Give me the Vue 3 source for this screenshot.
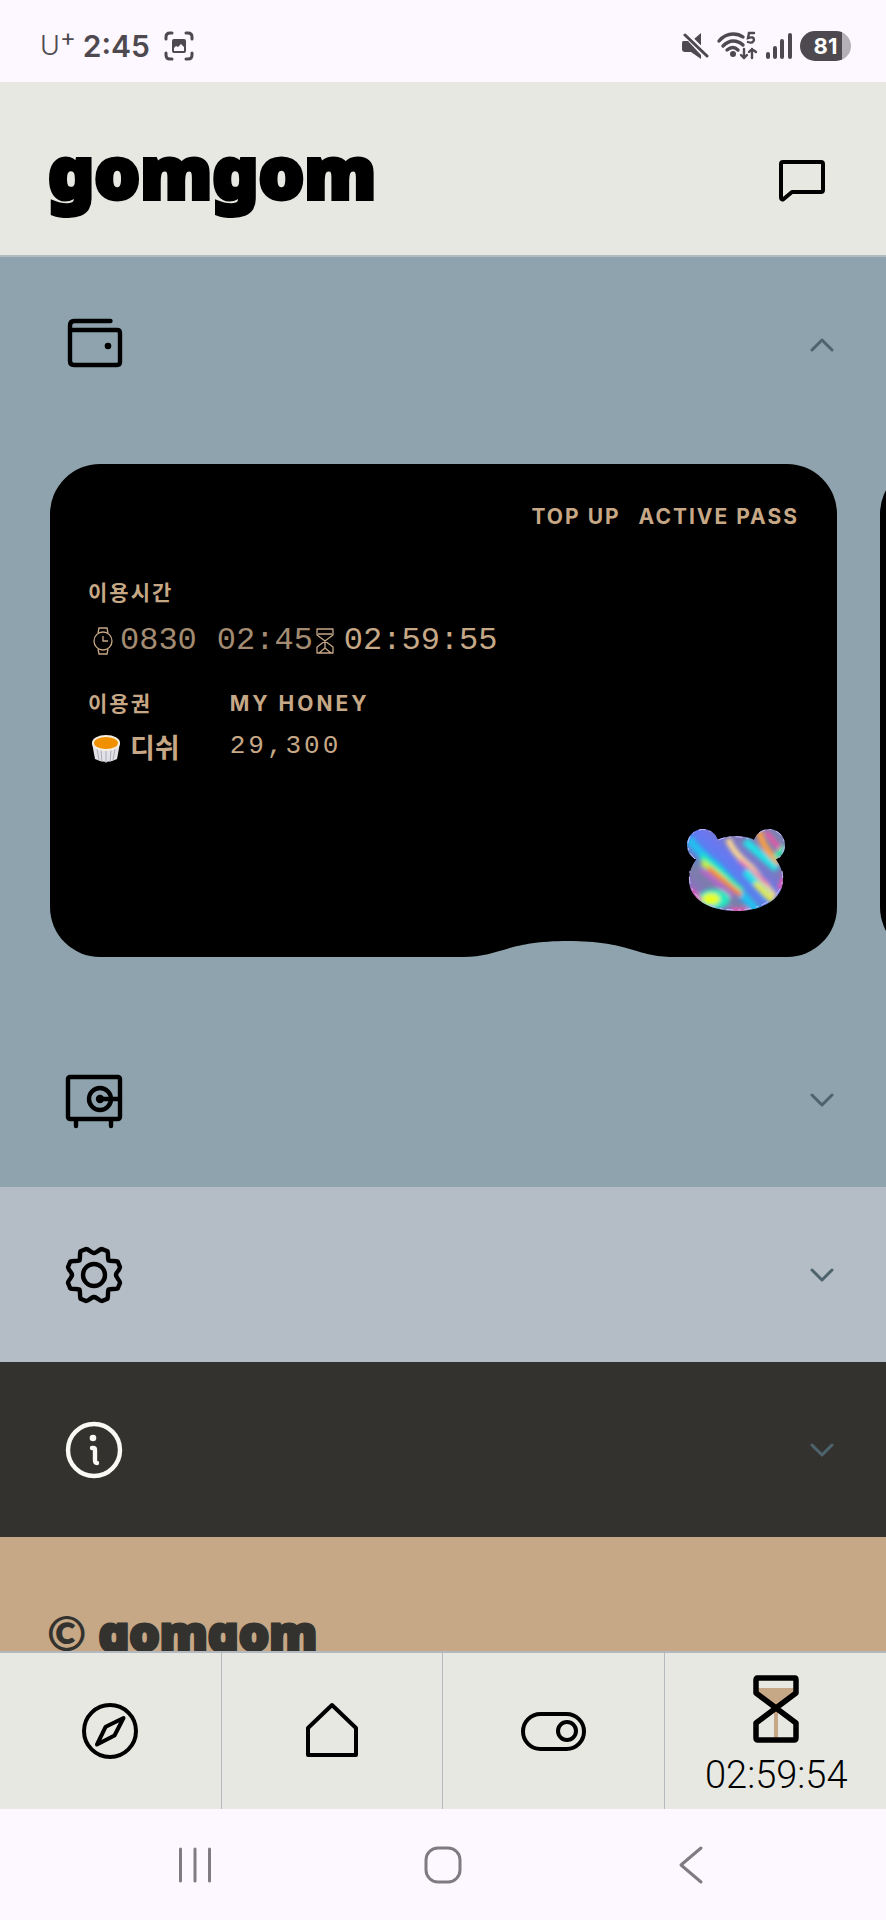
<script setup>
import { ref } from 'vue'

const walletOpen = ref(true)
</script>

<template>
  <div class="app">
    <div class="status">
      <span class="carrier">U<sup>+</sup></span>
      <span class="clock">2:45</span>
      <svg class="capture" width="30" height="30" viewBox="0 0 30 30" aria-hidden="true">
        <g fill="none" stroke="currentColor" stroke-width="3" stroke-linecap="round">
          <path d="M2 8V6Q2 2 6 2H8M22 2h2q4 0 4 4v2M28 22v2q0 4-4 4h-2M8 28H6q-4 0-4-4v-2" />
        </g>
        <path fill="currentColor" fill-rule="evenodd" d="M10 8h10q2 0 2 2v10q0 2-2 2H10q-2 0-2-2V10q0-2 2-2zm0 9v3h10v-4l-3-3-3 3-2-1z" />
      </svg>
      <div class="signals">
        <svg width="28" height="28" viewBox="0 0 28 28" aria-hidden="true">
          <path fill="currentColor" d="M2 9h5l13 14v4L10 20H4q-3 0-3-3v-4q0-4 1-4zM20 1v13l-7-7z" />
          <path stroke="#fdf7ff" stroke-width="2" d="M6 1l22 22" />
          <path stroke="currentColor" stroke-width="3" stroke-linecap="round" d="M4 3l22 21" />
        </svg>
        <svg width="42" height="30" viewBox="0 0 42 30" aria-hidden="true">
          <g fill="none" stroke="currentColor" stroke-width="3.400" stroke-linecap="round">
            <path d="M3 10Q9 3 17 3q6 0 10 3M7 15q5-5 10-5 6 0 10 4M11 19q6-5 11 0" />
            <path stroke-width="2.400" d="M38 2h-5l-1 5q6-2 6 2-1 4-6 2M28 18v9m-3-3l3 3 3-3M36 27v-9m-3 3l3-3 4 3" />
          </g>
          <circle cx="17" cy="23" r="3" fill="currentColor" />
        </svg>
        <svg width="28" height="28" viewBox="0 0 28 28" aria-hidden="true">
          <path stroke="currentColor" stroke-width="4" stroke-linecap="round" d="M3 22v3M10 16v9M17 9v16M25 3v22" />
        </svg>
        <span class="battery">81</span>
      </div>
    </div>

    <header class="top">
      <h1 class="logo">gomgom</h1>
      <button class="chat" aria-label="Messages">
        <svg width="46" height="42" viewBox="0 0 46 42" aria-hidden="true">
          <path fill="none" stroke="currentColor" stroke-width="4" stroke-linejoin="round" d="M4 2H42Q44 2 44 4V30Q44 32 42 32H13L4 39.500Q2 40 2 37V4Q2 2 4 2z" />
        </svg>
      </button>
    </header>

    <main class="content">
      <section class="blue">
        <button class="row" aria-label="Wallet" :aria-expanded="walletOpen" @click="walletOpen = !walletOpen">
          <svg width="58" height="58" viewBox="-29 -29 58 58" aria-hidden="true">
            <g fill="none" stroke="#000" stroke-width="4.400" stroke-linecap="round" stroke-linejoin="round">
              <path d="M16.500-24H-20Q-24-24-24-19V16Q-24 20-20 20H23Q26 20 26 17V-12Q26-15 23-15H-23" />
            </g>
            <circle cx="14" cy="1" r="3.300" />
          </svg>
          <svg class="chevron" width="24" height="14" viewBox="0 0 24 14" aria-hidden="true">
            <path :d="walletOpen ? 'M2 12L12 2L22 12' : 'M2 2L12 12L22 2'" />
          </svg>
        </button>

        <div v-if="walletOpen" class="cards">
          <article class="card">
            <div class="actions">
              <button>TOP UP</button>
              <button>ACTIVE PASS</button>
            </div>
            <h2 class="label">이용시간</h2>
            <div class="times">
              <svg width="32" height="28" viewBox="0 0 32 28" aria-hidden="true">
                <g fill="none" stroke="currentColor" stroke-width="1.300">
                  <circle cx="15" cy="14" r="9" />
                  <path d="M10 6l1-5h8l1 5M10 22l1 5h8l1-5M15 9v5h5" />
                </g>
              </svg>
              <span class="dim">0830</span>
              <span class="dim now">02:45</span>
              <svg class="glass" width="20" height="28" viewBox="0 0 20 28" aria-hidden="true">
                <g fill="none" stroke="currentColor" stroke-width="1.300" stroke-linejoin="round">
                  <path d="M2 2H18V8L2 20V26H18V20L2 8zM3 7H17M10 14v7M4 26l6-5 6 5" />
                </g>
              </svg>
              <span>02:59:55</span>
            </div>
            <dl class="facts">
              <div>
                <dt class="label">이용권</dt>
                <dd class="pass">
                  <svg width="32" height="30" viewBox="0 0 32 30" aria-hidden="true">
                    <path fill="#e2e2e8" d="M2 9L5 25Q16 31 27 25L30 9z" />
                    <path stroke="#aaaab4" stroke-width="1" d="M7 15l2 11M11 16l1 12M16 17v12M21 16l-1 12M25 15l-2 11" />
                    <ellipse cx="16" cy="9" rx="14" ry="8" fill="#f6eee0" />
                    <ellipse cx="16" cy="9" rx="12" ry="6" fill="#f09000" />
                  </svg>
                  디쉬
                </dd>
              </div>
              <div>
                <dt class="label wide">MY HONEY</dt>
                <dd class="amount">29,300</dd>
              </div>
            </dl>
            <svg class="bear" width="98" height="82" viewBox="0 0 98 82" role="img" aria-label="Bear">
              <defs>
                <clipPath id="bear">
                  <circle cx="16" cy="16" r="16" />
                  <circle cx="82" cy="16" r="16" />
                  <path d="M49 7C64 7 74 13 80 22Q96 34 96 51C96 70 75 82 49 82C23 82 2 70 2 51Q2 34 18 22C24 13 34 7 49 7z" />
                </clipPath>
                <filter id="glow" x="-20%" y="-20%" width="140%" height="140%"><feGaussianBlur stdDeviation="2" /></filter>
                <linearGradient id="foil" x1="0" y1="1" x2="1" y2="0">
                  <stop offset="0" stop-color="#a060d8" />
                  <stop offset=".3" stop-color="#7880a8" />
                  <stop offset=".45" stop-color="#5880f0" />
                  <stop offset=".55" stop-color="#6878f0" />
                  <stop offset=".7" stop-color="#8078b8" />
                  <stop offset="1" stop-color="#7c88b0" />
                </linearGradient>
              </defs>
              <g clip-path="url(#bear)">
                <path fill="url(#foil)" d="M0 0H98V82H0z" />
                <g fill="none" filter="url(#glow)" stroke-width="4">
                  <path stroke="#20c0f0" stroke-width="8" d="M2 10Q14 26 30 37L72 84" />
                  <path stroke="#20f0b0" stroke-width="6" d="M14 27L55 62" />
                  <path stroke="#c8f030" stroke-width="6" d="M15 33L38 52" />
                  <path stroke="#ff8040" stroke-width="5" d="M21 39L54 66" />
                  <path stroke="#c060d0" d="M13 40L46 68" />
                  <path stroke="#ffd890" stroke-width="6" d="M41 10Q46 24 64 38L88 68" />
                  <path stroke="#f080b0" d="M52 31L82 56" />
                  <path stroke="#20e0e8" stroke-width="8" d="M58 12L90 40M58 42L82 68" />
                  <path stroke="#e8e840" stroke-width="6" d="M68 54L86 72" />
                  <path stroke="#ffa040" stroke-width="6" d="M72 2Q76 20 92 34" />
                  <path stroke="#ff50a0" d="M79 3L96 24" />
                  <path stroke="#30e8b0" stroke-width="6" d="M88 29L98 18" />
                  <ellipse cx="27" cy="70" rx="16" ry="10" fill="#20e8c0" />
                  <ellipse cx="24" cy="70" rx="9" ry="6" fill="#e8ff20" />
                  <path stroke="#ff50b0" d="M3 60L14 72M44 81H60M92 60L98 48" />
                </g>
              </g>
              <path fill="none" stroke="#c8b8ff" stroke-width="1" stroke-dasharray="7 4 2 5" d="M31 11Q49 4 66 12M95 42C100 65 77 81 49 81C22 81-2 66 3 42M8 30Q-4 18 4 6Q14-4 26 4M72 4Q84-4 94 6Q102 18 91 30" />
            </svg>
            <svg class="notch" width="210" height="16" viewBox="0 0 210 16" aria-hidden="true">
              <path d="M0 16C36 16 44 0 105 0S174 16 210 16z" />
            </svg>
          </article>
          <article class="card" aria-hidden="true"></article>
        </div>

        <button class="row" aria-label="Safe" aria-expanded="false">
          <svg width="58" height="58" viewBox="-29 -29 58 58" aria-hidden="true">
            <g fill="none" stroke="#000" stroke-width="4.400" stroke-linecap="round" stroke-linejoin="round">
              <rect x="-26" y="-23" width="52" height="42" rx="2" />
              <circle cx="6" cy="-1" r="11" />
              <path d="M6-1H26M-18 20V26M17 20V26" />
            </g>
            <circle cx="6" cy="-1" r="4.200" />
          </svg>
          <svg class="chevron" width="24" height="14" viewBox="0 0 24 14" aria-hidden="true"><path d="M2 2L12 12L22 2" /></svg>
        </button>
      </section>

      <section class="grey">
        <button class="row" aria-label="Settings" aria-expanded="false">
          <svg width="58" height="58" viewBox="-29 -29 58 58" aria-hidden="true">
            <g fill="none" stroke="#000" stroke-width="4.400" stroke-linecap="round" stroke-linejoin="round">
              <path v-for="turn in [0, 90, 180, 270]" :key="turn" :transform="`rotate(${turn})`" d="M0-22C3-22 5-26 8-26L13.500-23.700C14.500-21 13.500-17 14.500-14.500C17-13.500 21-14.500 23.700-13.500L26-8C26-5 22-3 22 0" />
              <circle r="11" />
            </g>
          </svg>
          <svg class="chevron" width="24" height="14" viewBox="0 0 24 14" aria-hidden="true"><path d="M2 2L12 12L22 2" /></svg>
        </button>
      </section>

      <section class="dark">
        <button class="row" aria-label="Information" aria-expanded="false">
          <svg width="58" height="58" viewBox="-29 -29 58 58" aria-hidden="true">
            <g fill="none" stroke="#fafaf5" stroke-width="4.400" stroke-linecap="round" stroke-linejoin="round">
              <circle r="26" />
              <path d="M-2-2H-1Q1-2 1 0V10Q1 13 3 13" />
            </g>
            <circle cx="-1" cy="-12" r="3.300" fill="#fafaf5" />
          </svg>
          <svg class="chevron" width="24" height="14" viewBox="0 0 24 14" aria-hidden="true"><path d="M2 2L12 12L22 2" /></svg>
        </button>
      </section>

      <footer class="foot"><span>©</span> gomgom</footer>
    </main>

    <nav class="tabs">
      <a href="#explore" aria-label="Explore">
        <svg width="58" height="58" viewBox="-29 -29 58 58" aria-hidden="true">
          <g fill="none" stroke="currentColor" stroke-width="4" stroke-linejoin="round">
            <circle r="26" />
            <path d="M13.500-13L4.500 4.500L-13 13.500L-4.300-4.300z" />
          </g>
        </svg>
      </a>
      <a href="#home" aria-label="Home">
        <svg width="58" height="58" viewBox="-29 -29 58 58" aria-hidden="true">
          <path fill="none" stroke="currentColor" stroke-width="4" stroke-linejoin="round" d="M0-26L-24-3V24H24V-3z" />
        </svg>
      </a>
      <a href="#control" aria-label="Control">
        <svg width="66" height="58" viewBox="-33 -29 66 58" aria-hidden="true">
          <g fill="none" stroke="currentColor" stroke-width="4">
            <rect x="-30" y="-17" width="61" height="35" rx="17.500" />
            <circle cx="14" r="9" />
          </g>
        </svg>
      </a>
      <a href="#timer" class="timer">
        <svg width="48" height="68" viewBox="0 0 48 68" aria-hidden="true">
          <path fill="#c6a886" d="M5 13H43V18L24 33L5 18zM22 34h4v30h-4z" />
          <path fill="none" stroke="currentColor" stroke-width="5.500" stroke-linejoin="round" d="M5 3H43Q44 3 44 5V18L4 48V63Q4 65 6 65H42Q44 65 44 63V48L4 18V5Q4 3 6 3z" />
        </svg>
        <span>02:59:54</span>
      </a>
    </nav>

    <div class="system">
      <button aria-label="Recents">
        <svg width="38" height="40" viewBox="-19 -20 38 40" aria-hidden="true"><path d="M-14.500-16V16M0-16V16M14.500-16V16" /></svg>
      </button>
      <button aria-label="Home screen">
        <svg width="38" height="40" viewBox="-19 -20 38 40" aria-hidden="true"><rect x="-17" y="-17" width="34" height="34" rx="12" /></svg>
      </button>
      <button aria-label="Back">
        <svg width="38" height="40" viewBox="-19 -20 38 40" aria-hidden="true"><path d="M10-17L-10 0L10 17" /></svg>
      </button>
    </div>
  </div>
</template>

<style>
body {
  background: #fdf7ff;
}
</style>

<style scoped>
* {
  box-sizing: border-box;
}

.app {
  display: flex;
  flex-direction: column;
  height: 100vh;
  overflow: hidden;
  color: #000;
  font-family: Inter, "Noto Sans CJK KR", sans-serif;
}

button {
  padding: 0;
  border: 0;
  background: none;
  color: inherit;
  font: inherit;
  letter-spacing: inherit;
  cursor: pointer;
}

svg {
  display: block;
  flex: none;
}

h1,
h2,
dl,
dd {
  margin: 0;
}

.status {
  display: flex;
  align-items: center;
  flex: none;
  height: 82px;
  padding: 10px 35px 0 40px;
  color: #4e494f;
}

.carrier {
  display: flex;
  align-items: center;
  font-size: 27px;
  font-weight: 300;
  line-height: 32px;
}

.carrier sup {
  margin-bottom: 16px;
  font-size: 24px;
  font-weight: 400;
  line-height: 16px;
}

.clock {
  margin-left: 7px;
  font-size: 30px;
  font-weight: 600;
}

.capture {
  margin-left: 14px;
}

.signals {
  display: flex;
  align-items: center;
  gap: 7px;
  margin-left: auto;
}

.battery {
  width: 51px;
  border-radius: 15px;
  background: linear-gradient(90deg, #4e494f 82%, #b5b0b8 82%);
  color: #fff;
  font-size: 22px;
  font-weight: 700;
  line-height: 30px;
  text-align: center;
}

.top {
  display: flex;
  align-items: center;
  justify-content: space-between;
  flex: none;
  height: 175px;
  padding: 24px 61px 0 48px;
  border-bottom: 2px solid #b0bcc2;
  background: #e8e8e2;
}

.logo {
  padding-bottom: 20px;
  font-family: "Noto Sans", sans-serif;
  font-size: 72px;
  font-weight: 900;
  line-height: 100px;
  -webkit-text-stroke: 4px #000;
  stroke-linejoin: round;
  paint-order: stroke;
}

.content {
  flex: 1;
  min-height: 0;
  overflow: hidden;
}

.blue {
  background: #8ea3ad;
}

.grey {
  background: #b4bcc5;
}

.dark {
  background: #33322e;
}

.row {
  display: flex;
  align-items: center;
  justify-content: space-between;
  width: 100%;
  height: 175px;
  padding: 0 52px 0 65px;
}

.chevron {
  fill: none;
  stroke: #4d646e;
  stroke-width: 3;
  stroke-linecap: round;
  stroke-linejoin: round;
}

.cards {
  display: flex;
  gap: 43px;
  padding: 32px 49px 55px 50px;
  overflow: hidden;
}

.card {
  position: relative;
  display: flex;
  flex: 0 0 100%;
  flex-direction: column;
  min-height: 493px;
  padding: 38px 38px 46px;
  border-radius: 50px;
  background: #000;
  color: #c6a886;
}

.actions {
  display: flex;
  justify-content: flex-end;
  gap: 18px;
  font-size: 21px;
  font-weight: 700;
  line-height: 30px;
  letter-spacing: 2px;
}

.label {
  font-size: 21px;
  font-weight: 700;
  line-height: 30px;
  letter-spacing: 2px;
}

.wide {
  letter-spacing: 3px;
}

.actions + .label {
  margin-top: 46px;
}

.times {
  display: flex;
  align-items: center;
  margin-top: 15px;
  font-family: "Liberation Mono", monospace;
  font-size: 32px;
  line-height: 36px;
}

.dim {
  color: #a38c72;
}

.now {
  margin-left: 20px;
}

.glass {
  margin: 0 9px 0 2px;
}

.facts {
  display: flex;
  gap: 50px;
  margin-top: 30px;
}

.pass {
  display: flex;
  align-items: center;
  gap: 8px;
  margin-top: 12px;
  padding-left: 2px;
  font-size: 27px;
  font-weight: 700;
  line-height: 36px;
}

.amount {
  margin-top: 12px;
  font-family: "Liberation Mono", monospace;
  font-size: 26px;
  line-height: 30px;
  letter-spacing: 3px;
}

.bear {
  align-self: flex-end;
  margin: auto 14px 0 0;
}

.notch {
  position: absolute;
  bottom: 0;
  left: 52.5%;
  fill: #8ea3ad;
}

.foot {
  display: flex;
  align-items: center;
  gap: 12px;
  height: 192px;
  padding-left: 47px;
  background: #c6a886;
  color: #33322e;
  font-family: "Noto Sans", sans-serif;
  font-size: 48px;
  font-weight: 900;
  line-height: 70px;
  -webkit-text-stroke: 3px #33322e;
  stroke-linejoin: round;
  paint-order: stroke;
}

.foot span {
  font-family: Lato, sans-serif;
  -webkit-text-stroke: 0;
}

.tabs {
  display: grid;
  grid-template-columns: repeat(4, 1fr);
  flex: none;
  height: 158px;
  border-top: 2px solid #b4b9bf;
  background: #e8e8e2;
}

.tabs a {
  display: flex;
  flex-direction: column;
  align-items: center;
  justify-content: center;
  border-right: 1px solid #b4b9bf;
  color: #000;
  text-decoration: none;
}

.tabs a:last-child {
  border-right: 0;
}

.tabs .timer {
  gap: 12px;
  padding: 8px 0 0 2px;
  font-family: Roboto, sans-serif;
  font-size: 38px;
  font-weight: 300;
  line-height: 40px;
}

.system {
  display: grid;
  grid-template-columns: repeat(3, 1fr);
  flex: none;
  height: 111px;
  padding: 0 8%;
  background: #fdf7ff;
}

.system button {
  display: flex;
  align-items: center;
  justify-content: center;
}

.system svg {
  fill: none;
  stroke: #807a82;
  stroke-width: 3;
  stroke-linecap: round;
  stroke-linejoin: round;
}
</style>
